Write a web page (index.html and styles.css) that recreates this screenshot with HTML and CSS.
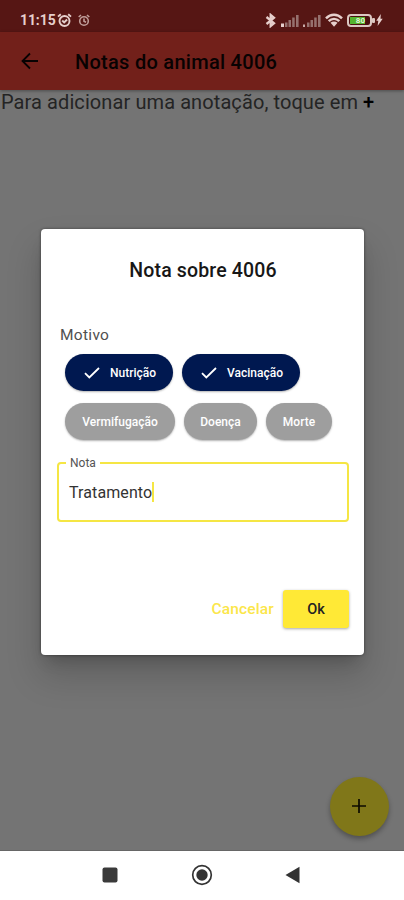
FILE: index.html
```html
<!DOCTYPE html>
<html lang="pt-BR">
<head>
    <meta charset="UTF-8">
    <meta name="viewport" content="width=device-width, initial-scale=1.0">
    <title>Notas do animal 4006</title>
    <link rel="stylesheet" href="styles.css">
</head>
<body>

<div class="screen">
    <div class="status-bar">
        <span class="clock">11:15</span>
        <svg class="alarm" width="15" height="15" viewBox="0 0 15 15" fill="none" stroke="#e6cfcc" stroke-width="1.9">
            <circle cx="7.5" cy="8" r="5"/>
            <path d="M1 3.6 3.8 1.2M14 3.6 11.2 1.2M5.2 7.5l2 2 2.9-3"/>
        </svg>
        <svg class="alarm-small" width="12" height="13" viewBox="0 0 12 13" fill="none" stroke="#c09e9a" stroke-width="1.6">
            <circle cx="6" cy="7" r="4.3"/>
            <path d="M.7 3 3 1M11.3 3 9 1M6 4.5v2.8l2 1"/>
        </svg>
        <div class="status-icons">
            <svg class="bluetooth" width="11" height="15" viewBox="0 0 11 15" fill="none" stroke="#e6cfcc" stroke-width="2.3">
                <path d="M1.5 4 9 10.2 5.7 13V2L9 4.8 1.5 11"/>
            </svg>
            <svg width="18" height="13" viewBox="0 0 18 13" fill="#96716e">
                <path fill="#e6cfcc" d="M0 9.5h3V13H0z"/>
                <path d="M4 8.5h2.5V13H4zM7.5 6H10v7H7.5zM11.2 3.5h2.5V13h-2.5zM15 1h2.6v12H15z"/>
            </svg>
            <svg width="18" height="13" viewBox="0 0 18 13" fill="#96716e">
                <path fill="#c8aaa7" d="M0 10.5h2V13H0z"/>
                <path d="M4 8.5h2.5V13H4zM7.5 6H10v7H7.5zM11.2 3.5h2.5V13h-2.5zM15 1h2.6v12H15z"/>
            </svg>
            <svg width="18" height="14" viewBox="0 0 18 14" fill="none" stroke="#e6cfcc" stroke-width="2.5">
                <path d="M1 5.3c4.7-4.6 11.3-4.6 16 0M3.7 8.2c3.1-3 7.5-3 10.6 0"/>
                <path fill="#e6cfcc" stroke="none" d="M5.5 9.8c2-1.8 5-1.8 7 0L9 13.8z"/>
            </svg>
            <div class="battery"><span class="battery-level">80</span></div>
            <svg class="bolt" width="7" height="12" viewBox="0 0 7 12" fill="#e6cfcc">
                <path d="M4.8 0 .3 6.7h2L1.6 12 6.7 4.8H4.5z"/>
            </svg>
        </div>
    </div>

    <div class="app-bar">
        <svg class="back" width="18" height="18" viewBox="0 0 18 18" fill="none" stroke="#080202" stroke-width="1.8">
            <path d="M17 9H2M9 1.5 1.5 9 9 16.5"/>
        </svg>
        <h1>Notas do animal 4006</h1>
    </div>

    <div class="content">
        <p class="hint">Para adicionar uma anotação, toque em <b>+</b></p>
    </div>

    <div class="nav-bar">
        <svg width="16" height="16" viewBox="0 0 16 16"><rect x=".5" y=".5" width="15" height="15" rx="2" fill="#3a3a3a"/></svg>
        <svg width="22" height="22" viewBox="0 0 22 22">
            <circle cx="11" cy="11" r="9.3" fill="none" stroke="#333" stroke-width="1.7"/>
            <circle cx="11" cy="11" r="5.7" fill="#333"/>
        </svg>
        <svg width="15" height="18" viewBox="0 0 15 18"><path d="M14.5.8v16.4L.5 9z" fill="#333"/></svg>
    </div>

    <button type="button" class="fab" aria-label="Adicionar">
        <svg width="14" height="14" viewBox="0 0 14 14" stroke="#0c0b00" stroke-width="1.7"><path d="M7 0v14M0 7h14"/></svg>
    </button>

    <div class="dialog">
        <h2>Nota sobre 4006</h2>
        <span class="main-label">Motivo</span>
        <div class="chips">
            <div class="chip selected">
                <svg width="16" height="12" viewBox="0 0 16 12" fill="none" stroke="#fff" stroke-width="1.8"><path d="M1 6.2 5.3 10.5 15 1"/></svg>
                <span>Nutrição</span>
            </div>
            <div class="chip selected vacinacao">
                <svg width="16" height="12" viewBox="0 0 16 12" fill="none" stroke="#fff" stroke-width="1.8"><path d="M1 6.2 5.3 10.5 15 1"/></svg>
                <span>Vacinação</span>
            </div>
        </div>
        <div class="chips">
            <div class="chip vermifugacao">Vermifugação</div>
            <div class="chip doenca">Doença</div>
            <div class="chip morte">Morte</div>
        </div>
        <fieldset class="note">
            <legend>Nota</legend>
            <span class="note-text">Tratamento</span><span class="caret"></span>
        </fieldset>
        <div class="buttons">
            <button type="button" class="cancel">Cancelar</button>
            <button type="button" class="ok">Ok</button>
        </div>
    </div>
</div>

</body>
</html>
```

FILE: styles.css
```css
* {
    box-sizing: border-box;
}
body {
    margin: 0;
    font-family: Roboto, sans-serif;
}
h1, h2, p {
    margin: 0;
    font-weight: 500;
}
svg {
    display: block;
    flex: none;
}
button {
    border: none;
    padding: 0;
    font-family: inherit;
}
.screen {
    position: relative;
    display: flex;
    flex-direction: column;
    width: 404px;
    height: 900px;
    overflow: hidden;
    background: #747474;
}
.status-bar {
    display: flex;
    align-items: center;
    height: 32px;
    padding: 8px 21px 0 20px;
    background: #561614;
}
.clock {
    width: 37px;
    color: #e6cfcc;
    font-size: 14px;
    font-weight: 700;
    letter-spacing: -0.1px;
}
.alarm-small {
    margin-left: 6px;
}
.status-icons {
    display: flex;
    align-items: center;
    gap: 4px;
    margin-left: auto;
}
.bluetooth {
    margin-right: 1px;
}
.battery {
    position: relative;
    width: 25px;
    height: 13px;
    padding: 1px;
    border: 2px solid #dcc8c2;
    border-radius: 4px;
    background: #4b1010;
}
.battery::after {
    content: "";
    position: absolute;
    left: 23px;
    top: 2px;
    width: 3px;
    height: 5px;
    border-radius: 1px;
    background: #dcc8c2;
}
.battery-level {
    display: block;
    width: 15px;
    height: 7px;
    background: #55b52e;
    color: #e2f5d8;
    font-size: 8px;
    font-weight: 700;
    line-height: 8px;
    text-align: right;
}
.app-bar {
    display: flex;
    align-items: center;
    height: 58px;
    padding-left: 21px;
    background: #72201a;
    box-shadow: 0 1px 3px rgba(0, 0, 0, 0.35);
    z-index: 1;
}
h1 {
    margin-left: 36px;
    padding-top: 1px;
    color: #080202;
    font-size: 20px;
    letter-spacing: 0.28px;
}
.content {
    flex: 1;
    border-bottom: 1px solid #666;
}
.hint {
    padding-left: 1px;
    color: #242424;
    font-size: 20px;
    font-weight: 400;
    line-height: 24px;
    letter-spacing: 0.09px;
    white-space: nowrap;
}
.hint b {
    color: #000;
    font-weight: 500;
}
.nav-bar {
    display: flex;
    align-items: center;
    justify-content: space-between;
    height: 49px;
    padding: 0 104px 2px 102px;
    background: #fff;
}
.fab {
    position: absolute;
    right: 15px;
    bottom: 64px;
    display: flex;
    align-items: center;
    justify-content: center;
    width: 59px;
    height: 59px;
    padding: 0 1px 1px 0;
    border-radius: 50%;
    background: #807719;
    box-shadow: 0 3px 5px rgba(0, 0, 0, 0.3);
}
.dialog {
    position: absolute;
    left: 41px;
    top: 229px;
    z-index: 2;
    width: 323px;
    height: 426px;
    padding: 29px 15px 0 16px;
    border-radius: 4px;
    background: #fff;
    box-shadow: 0 10px 15px -6px rgba(0, 0, 0, 0.2), 0 20px 34px 2px rgba(0, 0, 0, 0.16), 0 0 3px rgba(0, 0, 0, 0.45);
}
h2 {
    height: 24px;
    color: #171717;
    font-size: 19.5px;
    line-height: 25px;
    letter-spacing: 0.15px;
    text-align: center;
}
.main-label {
    display: block;
    margin: 43px 0 0 3px;
    color: #505050;
    font-size: 15.5px;
    line-height: 20px;
    letter-spacing: 0.3px;
}
.chips {
    display: flex;
    gap: 9px;
    margin: 9px 0 0 8px;
}
.chips + .chips {
    margin-top: 12px;
}
.chip {
    display: flex;
    align-items: center;
    justify-content: center;
    width: 108px;
    height: 37px;
    border-radius: 19px;
    background: #9e9e9e;
    color: #fff;
    font-size: 12px;
    font-weight: 500;
    box-shadow: 0 1px 2px rgba(0, 0, 0, 0.3);
}
.chip.selected {
    gap: 10px;
    padding-left: 2px;
    background: #001850;
}
.chip.vacinacao { width: 118px; }
.chip.vermifugacao { width: 110px; }
.chip.doenca { width: 73px; }
.chip.morte { width: 66px; }
.note {
    display: flex;
    align-items: flex-start;
    height: 66px;
    min-width: 0;
    margin: 16px 0 0;
    padding: 12px 11px 0 10px;
    border: 2px solid #f5e644;
    border-radius: 4px;
}
.note legend {
    margin-left: -3px;
    padding: 0 4px;
    color: #555;
    font-size: 12px;
    line-height: 14px;
}
.note-text {
    color: #333;
    font-size: 16px;
    line-height: 22px;
    letter-spacing: 0.1px;
}
.caret {
    width: 2px;
    height: 20px;
    background: #f5e644;
}
.buttons {
    display: flex;
    align-items: center;
    justify-content: flex-end;
    gap: 9px;
    margin-top: 68px;
}
.cancel {
    background: none;
    color: #fbe64a;
    font-size: 15.5px;
    font-weight: 500;
    letter-spacing: 0.15px;
}
.ok {
    width: 66px;
    height: 38px;
    border-radius: 3px;
    background: #ffe936;
    color: #222;
    font-size: 14.5px;
    font-weight: 500;
    box-shadow: 0 1px 3px rgba(0, 0, 0, 0.35);
}
```
